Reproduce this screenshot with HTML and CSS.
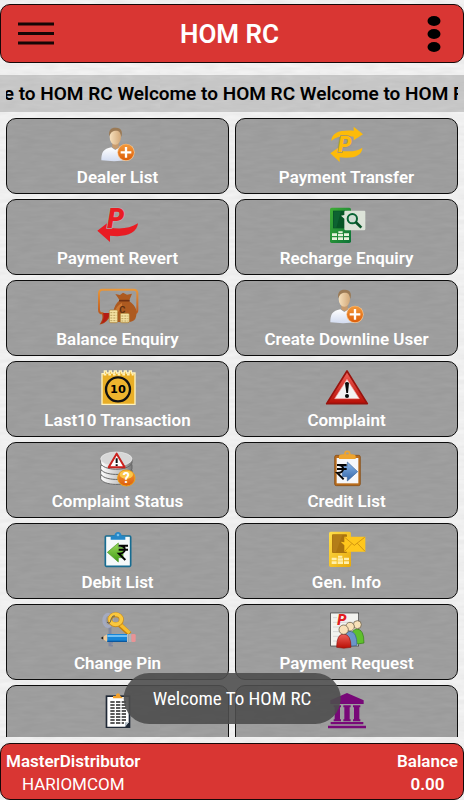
FILE: index.html
```html
<!DOCTYPE html>
<html lang="en">
<head>
    <meta charset="UTF-8">
    <meta name="viewport" content="width=device-width, initial-scale=1.0">
    <title>HOM RC</title>
    <link rel="stylesheet" href="styles.css">
</head>
<body>
    <svg class="defs" aria-hidden="true">
        <defs>
            <linearGradient id="skin" x2="1" y2="0"><stop offset="0" stop-color="#f6e0bd"/><stop offset="1" stop-color="#d3a878"/></linearGradient>
            <linearGradient id="shirt" x2="0" y2="1"><stop offset="0" stop-color="#ffffff"/><stop offset="1" stop-color="#d3dcf0"/></linearGradient>
            <linearGradient id="orange" x2="0" y2="1"><stop offset="0" stop-color="#f39a3c"/><stop offset="1" stop-color="#dd5d08"/></linearGradient>
            <linearGradient id="green" x2="1" y2="1"><stop offset="0" stop-color="#3fae35"/><stop offset="1" stop-color="#0c7238"/></linearGradient>
            <linearGradient id="gold" x2="1" y2="1"><stop offset="0" stop-color="#ffdf4a"/><stop offset="1" stop-color="#e8a90c"/></linearGradient>
            <linearGradient id="red" x2="0" y2="1"><stop offset="0" stop-color="#f1615a"/><stop offset="1" stop-color="#b80f05"/></linearGradient>
            <linearGradient id="frame" x2="0" y2="1"><stop offset="0" stop-color="#e9973a"/><stop offset="1" stop-color="#a93f14"/></linearGradient>
            <linearGradient id="metal" x2="1" y2="0"><stop offset="0" stop-color="#ffffff"/><stop offset="0.6" stop-color="#c4c4c4"/><stop offset="1" stop-color="#777777"/></linearGradient>
            <linearGradient id="blue" x2="0" y2="1"><stop offset="0" stop-color="#8db8ea"/><stop offset="1" stop-color="#2f64a8"/></linearGradient>
            <linearGradient id="lime" x2="0" y2="1"><stop offset="0" stop-color="#9bdc5c"/><stop offset="1" stop-color="#3f9a16"/></linearGradient>
        </defs>
        <symbol id="user-add" viewBox="0 0 120 108">
            <path d="M10 103C10 80 16 68 40 64L52 72L65 64C84 68 88 82 87 103Q48 108 10 103Z" fill="url(#shirt)"/>
            <path d="M43 48H62V63Q53 75 43 63Z" fill="#c99b6c"/>
            <ellipse cx="52" cy="33" rx="17" ry="23" fill="url(#skin)"/>
            <path d="M34 31C30 11 41 4 54 5C70 5 75 17 70 33C68 20 64 14 55 14C44 14 38 18 34 31Z" fill="#9b7a55"/>
            <circle cx="84" cy="79" r="26" fill="#f4c28c"/>
            <circle cx="84" cy="79" r="24" fill="url(#orange)"/>
            <path d="M84 63V95M68 79H100" stroke="#fff" stroke-width="7"/>
        </symbol>
    </svg>

    <header class="topbar">
        <button class="icon-btn" type="button" aria-label="Menu">
            <svg width="36" height="24" viewBox="0 0 36 24"><path d="M0 2H36M0 11.500H36M0 21H36" stroke="#160606" stroke-width="3"/></svg>
        </button>
        <h1>HOM RC</h1>
        <button class="icon-btn" type="button" aria-label="More options">
            <svg width="14" height="38" viewBox="0 0 14 38"><ellipse cx="7" cy="6" rx="6.500" ry="5"/><ellipse cx="7" cy="19" rx="6.500" ry="5"/><ellipse cx="7" cy="32" rx="6.500" ry="5"/></svg>
        </button>
    </header>

    <div class="ticker">
        <p>Welcome to HOM RC Welcome to HOM RC Welcome to HOM RC</p>
    </div>

    <main class="grid">
        <button class="tile" type="button">
            <svg viewBox="0 0 120 108"><use href="#user-add"/></svg>
            Dealer List
        </button>
        <button class="tile" type="button">
            <svg viewBox="0 0 120 108">
                <path d="M13 44C14 20 38 11 80 14V2L108 25L80 43V32C52 28 32 30 13 44Z" fill="#fdbb09"/>
                <path d="M106 65C105 90 80 98 38 94V108L10 82L38 62V74C70 78 90 76 106 65Z" fill="#fdbb09"/>
                <text class="p-mark" x="33" y="78" font-size="64" fill="#fdbb09" stroke="#9b9379" stroke-width="5">P</text>
            </svg>
            Payment Transfer
        </button>
        <button class="tile" type="button">
            <svg viewBox="0 0 120 108">
                <path d="M-2 71L28 48L32 61C65 68 95 65 120 49C117 79 83 92 36 86L36 105Z" fill="#e91c23"/>
                <text class="p-mark" x="28" y="62" font-size="80" fill="#e91c23" stroke="#aaa" stroke-width="5">P</text>
            </svg>
            Payment Revert
        </button>
        <button class="tile" type="button">
            <svg viewBox="0 0 120 108">
                <rect x="9" y="2" width="63" height="106" rx="5" fill="url(#green)"/>
                <rect x="18" y="11" width="43" height="53" fill="#075426"/>
                <path d="M20 13H42L28 62H20Z" fill="#0d6231"/>
                <path d="M55 11H112Q115 11 115 15V66Q115 70 111 70H56Q52 70 52 66V35L42 26L52 24V15Q52 11 55 11Z" fill="#dce3d8"/>
                <circle cx="76" cy="35" r="14" fill="#d0ded3" stroke="#086334" stroke-width="6"/>
                <path d="M86 45L103 62" stroke="#075126" stroke-width="8"/>
                <path d="M34 73H47V79H34ZM15 79H30V87H15ZM33 81H48V88H33ZM51 79H66V87H51ZM15 91H30V99H15ZM33 91H48V99H33ZM51 91H66V99H51Z" fill="#e7f3dc"/>
            </svg>
            Recharge Enquiry
        </button>
        <button class="tile" type="button">
            <svg viewBox="0 0 120 108">
                <path d="M13 5H107Q118 5 118 16V66Q118 76 107 76H40C29 94 22 103 11 105Q20 91 14 76Q3 76 3 65V16Q3 5 13 5Z" fill="none" stroke="url(#frame)" stroke-width="6"/>
                <path d="M15 75H38C29 94 22 103 11 105Q20 91 15 75Z" fill="#b51b14"/>
                <path d="M65 37L52 18L66 21L75 14L87 20L102 17L93 39C116 55 120 72 112 92Q106 102 87 102H48C43 81 44 54 65 37Z" fill="#ad5a20"/>
                <path d="M72 45C57 53 50 64 49 83Q76 59 72 45Z" fill="#cd7934"/>
                <path d="M63 38H95" stroke="#713111" stroke-width="5"/>
                <text x="64" y="76" font-size="28" font-weight="700" fill="#5b2e10">C</text>
                <g fill="#f4e2a3" stroke="#a67831" stroke-width="2">
                    <rect x="34" y="66" width="25" height="38" rx="4"/>
                    <rect x="67" y="76" width="27" height="28" rx="4"/>
                </g>
                <path d="M37 74H56M37 82H56M37 90H56M37 98H56M70 84H91M70 92H91M70 99H91" stroke="#9d803e" stroke-width="2" stroke-dasharray="6 3"/>
            </svg>
            Balance Enquiry
        </button>
        <button class="tile" type="button">
            <svg viewBox="0 0 120 108"><use href="#user-add"/></svg>
            Create Downline User
        </button>
        <button class="tile" type="button">
            <svg viewBox="0 0 120 108">
                <path d="M12 14H19V6H25V12H34V6H40V12H49V6H55V12H64V6H70V12H79V6H85V12H94V6H100V12H111V106H12Z" fill="#e8ae27" stroke="#fff3bd" stroke-width="4"/>
                <path d="M17 17H107" stroke="#fff3bd" stroke-width="5" stroke-dasharray="8 6"/>
                <circle cx="60" cy="61" r="36" fill="#eeb42e" stroke="#111" stroke-width="7"/>
                <text class="ten" x="60" y="73" font-size="34">10</text>
            </svg>
            Last10 Transaction
        </button>
        <button class="tile" type="button">
            <svg viewBox="0 0 120 108">
                <path d="M60 6L121 104H-1Z" fill="url(#red)" stroke="#98120c" stroke-width="5" stroke-linejoin="round"/>
                <path d="M60 31L97 89H23Z" fill="#f3f3f3" stroke="#f4a09a" stroke-width="2"/>
                <path d="M54 42Q60 36 66 42L63 72H58Z" fill="#080808"/>
                <ellipse cx="60" cy="81" rx="6" ry="6" fill="#080808"/>
            </svg>
            Complaint
        </button>
        <button class="tile" type="button">
            <svg viewBox="0 0 120 108">
                <g fill="url(#metal)" stroke="#686868" stroke-width="3">
                    <path d="M8 76V86C13 107 90 111 102 86V74Z"/>
                    <path d="M8 61V71C13 92 90 96 102 71V59Z"/>
                    <path d="M8 46V56C13 77 90 81 102 56V44Z"/>
                    <path d="M8 28V39C13 62 90 66 102 39V28Z"/>
                </g>
                <ellipse cx="55" cy="27" rx="47" ry="21" fill="#d7d7d7" stroke="#eee" stroke-width="2"/>
                <path d="M56 11L80 52H32Z" fill="#fff" stroke="#ca211d" stroke-width="6" stroke-linejoin="round"/>
                <path d="M56 25V39M56 43V48" stroke="#111" stroke-width="6"/>
                <ellipse cx="85" cy="84" rx="26" ry="24" fill="url(#orange)" stroke="#e9a21c" stroke-width="3"/>
                <ellipse cx="85" cy="74" rx="20" ry="12" fill="#fbc84a"/>
                <text x="74" y="98" font-size="42" font-weight="700" fill="#fff">?</text>
            </svg>
            Complaint Status
        </button>
        <button class="tile" type="button">
            <svg viewBox="0 0 120 108">
                <rect x="23" y="16" width="77" height="91" rx="5" fill="#b86c1d" stroke="#81460e" stroke-width="2"/>
                <rect x="29" y="24" width="65" height="76" fill="#f6f7fa"/>
                <circle cx="61" cy="11" r="7" fill="none" stroke="#eea42e" stroke-width="5"/>
                <path d="M36 18Q37 13 47 13H75Q85 13 86 18V27H36Z" fill="#efa52f"/>
                <path d="M46 49H61V36L92 65L61 93V80H46Z" fill="url(#blue)" stroke="#3e669c" stroke-width="2"/>
                <path class="rupee" d="M30 45H59M30 57H59M32 45C54 43 54 69 31 69L50 88"/>
            </svg>
            Credit List
        </button>
        <button class="tile" type="button">
            <svg viewBox="0 0 120 108">
                <rect x="22" y="15" width="76" height="91" rx="3" fill="#f5f9fa" stroke="#176c91" stroke-width="5"/>
                <path d="M38 14H49Q51 3 60 3Q69 3 71 14H82V26H38Z" fill="#2587c7"/>
                <circle cx="60" cy="12" r="4" fill="#7ac1ea"/>
                <path d="M28 64L61 36V49H75V80H61V93Z" fill="url(#lime)" stroke="#489629" stroke-width="2"/>
                <path class="rupee" d="M62 44H90M62 56H90M64 44C86 42 86 68 63 68L82 87"/>
            </svg>
            Debit List
        </button>
        <button class="tile" type="button">
            <svg viewBox="0 0 120 108">
                <rect x="6" y="2" width="66" height="106" rx="5" fill="url(#gold)"/>
                <rect x="15" y="10" width="45" height="56" rx="3" fill="#a9730f"/>
                <path d="M17 12H46L27 64H17Z" fill="#b37d18"/>
                <path d="M52 17H115V62H52V43L41 32L52 34Z" fill="#ffc71c"/>
                <path d="M53 19L82 43L113 19M53 61L74 38M114 61L91 37" fill="none" stroke="#bd7d09" stroke-width="2"/>
                <path d="M33 74H46V80H33ZM14 80H29V88H14ZM32 82H48V89H32ZM51 80H66V88H51ZM14 91H29V99H14ZM32 91H48V99H32ZM51 91H66V99H51Z" fill="#fff0ad"/>
            </svg>
            Gen. Info
        </button>
        <button class="tile" type="button">
            <svg viewBox="0 0 120 108">
                <path d="M36 43V103" stroke="#8189a0" stroke-width="9"/>
                <path d="M38 92H45M38 101H45" stroke="#8189a0" stroke-width="5"/>
                <ellipse cx="30" cy="25" rx="12" ry="18" fill="none" stroke="#a4aac0" stroke-width="10"/>
                <path d="M61 34L95 66" stroke="#c28111" stroke-width="15"/>
                <path d="M61 32L95 63" stroke="#f7bd2c" stroke-width="10"/>
                <ellipse cx="53" cy="23" rx="17" ry="15" fill="none" stroke="#c98a18" stroke-width="15"/>
                <ellipse cx="53" cy="22" rx="17" ry="15" fill="none" stroke="#fac83e" stroke-width="11"/>
                <path d="M27 30Q36 40 40 20Q44 9 51 12" fill="none" stroke="#555" stroke-width="3"/>
                <path d="M8 78L29 66V90Z" fill="#edc99b"/>
                <path d="M8 78L16 73V83Z" fill="#222"/>
                <rect x="28" y="66" width="59" height="24" fill="#1686d8"/>
                <path d="M28 72H87" stroke="#71c0f3" stroke-width="6"/>
                <path d="M28 88H87" stroke="#0b579d" stroke-width="4"/>
                <rect x="87" y="66" width="13" height="24" fill="#c4c8cb"/>
                <path d="M91 66V90M96 66V90" stroke="#858b91" stroke-width="2"/>
                <rect x="100" y="66" width="13" height="24" rx="4" fill="#e99395"/>
            </svg>
            Change Pin
        </button>
        <button class="tile" type="button">
            <svg viewBox="0 0 120 108">
                <rect x="11" y="3" width="84" height="99" fill="#f3f3ef" stroke="#333" stroke-width="2"/>
                <path d="M18 17H30M18 31H83M18 45H83M18 59H83M18 73H83M18 87H83" stroke="#d6d6d6" stroke-width="3"/>
                <text class="p-mark" x="31" y="38" font-size="44" fill="#e31d21">P</text>
                <path d="M70 93Q70 51 90 51Q111 52 111 93Q91 99 70 93Z" fill="#5fc02c" stroke="#367c1d" stroke-width="2"/>
                <circle cx="91" cy="38" r="12" fill="#f8e1b9" stroke="#594d38" stroke-width="2"/>
                <path d="M49 100Q49 58 69 58Q90 59 90 100Q69 105 49 100Z" fill="#6c96c9" stroke="#365e8d" stroke-width="2"/>
                <circle cx="69" cy="44" r="13" fill="#f8e1b9" stroke="#594d38" stroke-width="2"/>
                <path d="M29 106Q29 66 50 66Q72 67 72 106Q50 111 29 106Z" fill="url(#red)" stroke="#8e1711" stroke-width="2"/>
                <circle cx="50" cy="53" r="14" fill="#f8e1b9" stroke="#594d38" stroke-width="2"/>
            </svg>
            Payment Request
        </button>
        <button class="tile" type="button" aria-label="Report">
            <svg viewBox="0 0 120 108">
                <path d="M23 7H97V105H23Z" fill="#202936"/>
                <path d="M28 12H92V88L81 101H28Z" fill="#fff"/>
                <path d="M92 88H81V101Z" fill="#aeb8c1"/>
                <path d="M45 16V9H53Q54 1 60 1Q66 1 67 9L76 16Z" fill="#f3a12b"/>
                <path d="M37 27H84M37 36H84M37 45H84M37 54H84M37 63H84M37 72H84M37 81H84M37 90H78" stroke="#252525" stroke-width="4" stroke-dasharray="13 4"/>
            </svg>
        </button>
        <button class="tile" type="button" aria-label="Bank">
            <svg viewBox="0 0 120 108" fill="#780878">
                <path d="M60 0L110 22V33H10V22Z"/>
                <path d="M20 37H42V43H39V79H42V85H20V79H23V43H20ZM49 37H71V43H68V79H71V85H49V79H52V43H49ZM78 37H100V43H97V79H100V85H78V79H81V43H78Z"/>
                <path d="M11 87H109V94H11ZM3 98H117V106H3Z"/>
            </svg>
        </button>
    </main>

    <footer class="account">
        <div class="account-col">
            <strong>MasterDistributor</strong>
            <span>HARIOMCOM</span>
        </div>
        <div class="account-col">
            <strong>Balance</strong>
            <strong>0.00</strong>
        </div>
    </footer>

    <div class="toast" role="status">Welcome To HOM RC</div>
</body>
</html>
```
FILE: styles.css
```css
* {
    box-sizing: border-box;
}

body {
    margin: 0;
    padding-top: 4px;
    height: 100vh;
    display: flex;
    flex-direction: column;
    position: relative;
    overflow: hidden;
    font-family: Roboto, "Liberation Sans", sans-serif;
    background-color: #f4f4f4;
    /* light paper grain */
    background-image: url("data:image/svg+xml,%3Csvg xmlns='http://www.w3.org/2000/svg' width='160' height='160'%3E%3Cfilter id='n'%3E%3CfeTurbulence type='fractalNoise' baseFrequency='.05 .25' numOctaves='2' stitchTiles='stitch'/%3E%3CfeColorMatrix values='0 0 0 0 0 0 0 0 0 0 0 0 0 0 0 .06 0 0 0 -.01'/%3E%3C/filter%3E%3Crect width='160' height='160' filter='url(%23n)'/%3E%3C/svg%3E");
}

button {
    font-family: inherit;
    cursor: pointer;
}

.defs {
    position: absolute;
    width: 0;
    height: 0;
}

.topbar,
.account {
    display: flex;
    justify-content: space-between;
    flex-shrink: 0;
    color: #fff;
    background: #d93633;
    border: 1px solid #160808;
    border-radius: 10px;
}

.topbar {
    align-items: center;
    height: 59px;
    padding: 0 17px;
}

.topbar h1 {
    margin: 0;
    font-size: 26px;
    font-weight: 600;
}

.icon-btn {
    display: flex;
    flex: 1;
    padding: 0;
    border: none;
    background: none;
}

.icon-btn:last-child {
    justify-content: flex-end;
    padding-right: 5px;
}

.ticker {
    flex-shrink: 0;
    margin: 12px 0 6px;
    padding: 0 6px;
    background: rgba(0, 0, 0, 0.17);
}

.ticker p {
    margin: 0;
    overflow: hidden;
    white-space: nowrap;
    text-indent: -71px;
    font-size: 19px;
    font-weight: 600;
    line-height: 37px;
    color: #000;
}

.grid {
    flex: 1;
    min-height: 0;
    overflow: hidden;
    display: grid;
    grid-template-columns: 1fr 1fr;
    grid-auto-rows: 76px;
    gap: 5px 6px;
    padding: 0 6px;
}

.tile {
    display: flex;
    flex-direction: column;
    align-items: center;
    gap: 3px;
    padding: 7px 0 0;
    border: 1px solid #0c0c0c;
    border-radius: 10px;
    background: rgba(0, 0, 0, 0.34);
    color: #fff;
    font-size: 17px;
    font-weight: 600;
    line-height: 24px;
}

.tile svg {
    width: 40px;
    height: 36px;
    flex-shrink: 0;
    overflow: visible;
}

.p-mark {
    font-weight: 900;
    font-style: italic;
    paint-order: stroke;
}

.ten {
    font-family: "DejaVu Sans", sans-serif;
    font-weight: 700;
    text-anchor: middle;
}

.rupee {
    fill: none;
    stroke: #050505;
    stroke-width: 6px;
}

.account {
    margin-top: 6px;
    padding: 6px 5px 3px;
    font-size: 17px;
    line-height: 23px;
}

.account strong {
    font-weight: 600;
}

.account-col {
    display: flex;
    flex-direction: column;
    align-items: center;
}

.toast {
    position: absolute;
    bottom: 76px;
    left: 50%;
    transform: translateX(-50%);
    padding: 0 29px;
    border-radius: 26px;
    background: rgba(78, 78, 78, 0.9);
    color: #fff;
    font-family: "Roboto Condensed", Roboto, sans-serif;
    font-size: 19px;
    line-height: 51px;
    white-space: nowrap;
}
```
